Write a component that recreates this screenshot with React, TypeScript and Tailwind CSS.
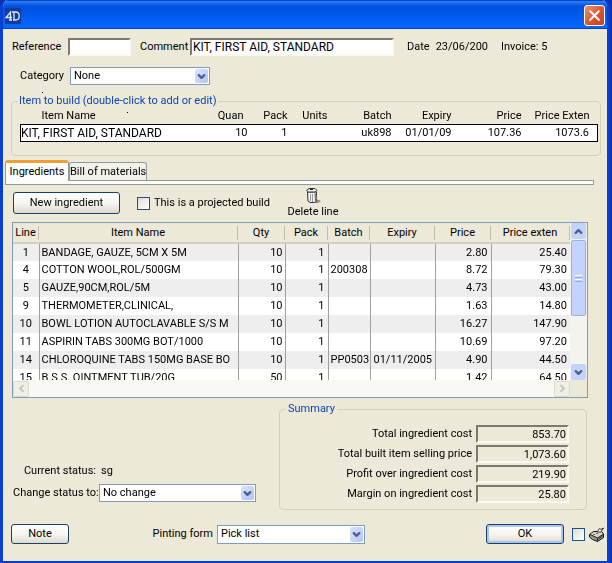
import React, { useState } from 'react';
import clsx from 'clsx';
import { ChevronDown, ChevronLeft, ChevronRight, ChevronUp, X } from 'lucide-react';

interface Ingredient {
  line: number;
  name: string;
  qty: number;
  pack: number;
  batch: string;
  expiry: string;
  price: string;
  total: string;
}

const INGREDIENTS: Ingredient[] = [
  { line: 1, name: 'BANDAGE, GAUZE, 5CM X 5M', qty: 10, pack: 1, batch: '', expiry: '', price: '2.80', total: '25.40' },
  { line: 4, name: 'COTTON WOOL,ROL/500GM', qty: 10, pack: 1, batch: '200308', expiry: '', price: '8.72', total: '79.30' },
  { line: 5, name: 'GAUZE,90CM,ROL/5M', qty: 10, pack: 1, batch: '', expiry: '', price: '4.73', total: '43.00' },
  { line: 9, name: 'THERMOMETER,CLINICAL,', qty: 10, pack: 1, batch: '', expiry: '', price: '1.63', total: '14.80' },
  { line: 10, name: 'BOWL LOTION AUTOCLAVABLE S/S M', qty: 10, pack: 1, batch: '', expiry: '', price: '16.27', total: '147.90' },
  { line: 11, name: 'ASPIRIN TABS 300MG BOT/1000', qty: 10, pack: 1, batch: '', expiry: '', price: '10.69', total: '97.20' },
  { line: 14, name: 'CHLOROQUINE TABS 150MG BASE BO', qty: 10, pack: 1, batch: 'PP0503', expiry: '01/11/2005', price: '4.90', total: '44.50' },
  { line: 15, name: 'B.S.S. OINTMENT TUB/20G', qty: 50, pack: 1, batch: '', expiry: '', price: '1.42', total: '64.50' },
];

const COLUMNS = [
  { label: 'Line', width: 'w-[26px]' },
  { label: 'Item Name', width: '' },
  { label: 'Qty', width: 'w-[47px]' },
  { label: 'Pack', width: 'w-[43px]' },
  { label: 'Batch', width: 'w-[42px]' },
  { label: 'Expiry', width: 'w-[65px]' },
  { label: 'Price', width: 'w-[56px]' },
  { label: 'Price exten', width: 'w-[79px]' },
];

const SUMMARY = [
  { id: 'total-cost', label: 'Total ingredient cost', value: '853.70' },
  { id: 'selling-price', label: 'Total built item selling price', value: '1,073.60' },
  { id: 'profit', label: 'Profit over ingredient cost', value: '219.90' },
  { id: 'margin', label: 'Margin on ingredient cost', value: '25.80' },
];

const SUNKEN =
  'h-[18px] border-2 border-t-[#7d7a6c] border-l-[#7d7a6c] border-r-[#faf9f4] border-b-[#faf9f4] outline-none';

const BUTTON =
  'rounded-[3px] border border-[#1c3f66] bg-linear-to-b from-white via-[#f6f5f0] to-[#dedacd] text-center';

const CHECKBOX =
  'size-[13px] shrink-0 appearance-none border border-[#1f5182] bg-linear-to-br from-[#dddcd6] to-white checked:bg-[#21a121]';

const SelectBox: React.FC<{ id: string; options: string[]; className: string }> = ({ id, options, className }) => (
  <div className={clsx('relative', className)}>
    <select id={id} className="h-full w-full appearance-none border border-[#7f9db9] bg-white pr-4 pl-[3px] outline-none">
      {options.map((option) => (
        <option key={option}>{option}</option>
      ))}
    </select>
    <span className="pointer-events-none absolute inset-y-[2px] right-[2px] flex w-[13px] items-center justify-center rounded-[2px] bg-linear-to-br from-[#dbe5fd] to-[#afc3f5]">
      <ChevronDown size={11} strokeWidth={5} className="text-[#4d6185]" />
    </span>
  </div>
);

const TrashIcon = () => (
  <svg width="16" height="16" viewBox="0 0 16 16" aria-hidden="true">
    <path d="M11 12l5 2-3 2H8z" fill="#8b8b86" />
    <path d="M2.500 5h9l-.5 9-1.500 1.500H5L3 14z" fill="#f2f2f0" stroke="#333" />
    <path d="M5.500 7v7M7.500 7v8" stroke="#9a9a98" />
    <path d="M9.500 6.500h1.500v7.500l-1 1z" fill="#777" />
    <path d="M1.500 3.500L4 1.500h6l2 2-2 1.500H3.500z" fill="#f0f0ee" stroke="#333" />
    <path d="M5 2.500h3" stroke="#222" />
  </svg>
);

const PrinterIcon = () => (
  <svg width="16" height="15" viewBox="0 0 16 15" aria-hidden="true">
    <path d="M.5 7.500l4-3 8 0 2 2.500v3.500l-6 4-5-2-3-2.500z" fill="#9a998f" stroke="#111" />
    <path d="M1 7.500l4-2.500h7l2 2-5.500 3.500z" fill="#d6d5cc" />
    <path d="M1 7.500l7.500 3.500L14 7.500M8.500 11v3" stroke="#222" fill="none" />
    <path d="M8 5l2.500-3.500 1.500 1L14.500 1 12 5z" fill="#fff" stroke="#333" />
    <path d="M9.500 12l4-3" stroke="#333" />
    <path d="M4 7.500h2" stroke="#2a9a3a" />
    <path d="M7 6.500h2" stroke="#d44" />
  </svg>
);

export default function App() {
  const [tab, setTab] = useState('Ingredients');

  return (
    <div className="bg-[#0831b4] font-['Roboto','Liberation_Sans',sans-serif] text-[11px] leading-[14px] text-black">
      <div className="mr-[2px] overflow-hidden rounded-t-lg border-x-[3px] border-b-[3px] border-[#0b3fd0] bg-[#ece9d8]">
        {/* Title bar */}
        <header className="-mx-[3px] flex h-[29px] items-center justify-between border-t border-b border-t-[#0a3fc0] border-b-[#0440c0] bg-linear-to-b from-[#2a80f5] via-[#0050e0] via-20% to-[#0568ff] px-[5px] pt-[2px]">
          <span className="flex size-4 items-center justify-center bg-[#103c9c]">
            <svg width="16" height="16" viewBox="0 0 16 16" role="img" aria-label="4D">
              <path d="M5.500 12V4L1 9.500h6M4 12h3M7 4h3.500c5 0 5 8 0 8H8M9 4v8" fill="none" stroke="#dfe8fb" strokeWidth="1.300" />
            </svg>
          </span>
          <button aria-label="Close" className="flex size-[21px] items-center justify-center rounded-[3px] border border-white bg-linear-to-br from-[#ee9377] via-[#de5632] to-[#c5401c]">
            <X size={17} strokeWidth={3} className="text-white" />
          </button>
        </header>

        <main className="pb-[17px]">
          {/* Build details */}
          <div className="flex items-center pt-[9px] pl-[9px]">
            <label htmlFor="reference" className="w-[56px]">Reference</label>
            <input id="reference" autoFocus className={clsx(SUNKEN, 'w-[63px] bg-white pl-px')} />
            <label htmlFor="comment" className="ml-[9px] w-[50px]">Comment</label>
            <input id="comment" defaultValue="KIT, FIRST AID, STANDARD" className={clsx(SUNKEN, 'w-[204px] bg-white pl-px text-xs')} />
            <span className="ml-[13px]">Date</span>
            <span className="ml-[6px]">23/06/200</span>
            <span className="ml-[13px]">Invoice: 5</span>
          </div>
          <div className="flex items-center pt-[11px] pl-[17px]">
            <label htmlFor="category" className="w-[50px]">Category</label>
            <SelectBox id="category" options={['None']} className="h-[18px] w-[140px]" />
          </div>

          <fieldset className="relative mt-[9px] mr-[6px] ml-[8px] h-[62px] rounded border border-[#d0d0bf] pr-[2px] pl-[4px]">
            {/* Stray marks around the group caption */}
            <span className="absolute -top-[16px] left-[30px] size-px bg-black" />
            <span className="absolute top-[4px] left-[115px] size-px bg-black" />
            <legend className="ml-[2px] px-px text-[#0b46b5]">Item to build (double-click to add or edit)</legend>
            <table className="ml-[4px] w-[calc(100%-4px)] table-fixed border-collapse text-right">
              <thead>
                <tr className="h-[16px]">
                  <th className="pl-[21px] text-left font-normal">Item Name</th>
                  <th className="w-[47px] pr-[4px] font-normal">Quan</th>
                  <th className="w-[40px] font-normal">Pack</th>
                  <th className="w-[40px] font-normal">Units</th>
                  <th className="w-[64px] font-normal">Batch</th>
                  <th className="w-[60px] font-normal">Expiry</th>
                  <th className="w-[70px] font-normal">Price</th>
                  <th className="w-[76px] pr-[8px] font-normal">Price Exten</th>
                </tr>
              </thead>
              <tbody>
                <tr className="h-[17px] border border-black bg-white">
                  <td className="text-left text-xs leading-[14px]">KIT, FIRST AID, STANDARD</td>
                  <td>10</td>
                  <td>1</td>
                  <td />
                  <td>uk898</td>
                  <td>01/01/09</td>
                  <td>107.36</td>
                  <td className="pr-[8px]">1073.6</td>
                </tr>
              </tbody>
            </table>
          </fieldset>

          {/* Tabs */}
          <div className="mt-[4px] mr-[13px] ml-[2px]">
            <div role="tablist" className="flex items-end">
              {['Ingredients', 'Bill of materials'].map((name) => (
                <button
                  key={name}
                  role="tab"
                  aria-selected={tab === name}
                  onClick={() => setTab(name)}
                  className={clsx(
                    'rounded-t-[3px] border-x border-[#919b9c] whitespace-nowrap',
                    tab === name
                      ? 'z-10 -mb-px h-[21px] w-[64px] border-t-[3px] border-t-[#f0a030] bg-[#fcfcfa]'
                      : 'h-[18px] border-t bg-[#f3f2ea]'
                  )}
                >
                  {name}
                </button>
              ))}
            </div>
            <div className="h-[5px] border border-[#919b9c] bg-[#fcfcfa]" />
          </div>

          {/* Toolbar */}
          <div className="flex items-start pl-[10px]">
            <button className={clsx(BUTTON, 'mt-[7px] h-[22px] w-[107px]')}>New ingredient</button>
            <label className="mt-[11px] ml-[17px] flex w-[150px] items-center gap-[4px]">
              <input type="checkbox" className={CHECKBOX} />
              This is a projected build
            </label>
            <button className="flex w-[52px] flex-col items-center pt-[2px] leading-[18px] whitespace-nowrap">
              <TrashIcon />
              Delete line
            </button>
          </div>

          {/* Ingredient list */}
          <div className="mt-px mr-[19px] ml-[9px] border border-[#7f9db9] bg-white">
            <div className="flex h-[157px]">
              <div className="min-w-0 flex-1 overflow-hidden">
                <table className="w-full table-fixed border-collapse">
                  <thead>
                    <tr className="h-[20px] border-b-2 border-[#d3cfbf] bg-[#ece9d8]">
                      {COLUMNS.map((column) => (
                        <th key={column.label} className={clsx(column.width, 'font-normal')}>
                          <div className="border-r border-[#c1bdac]">{column.label}</div>
                        </th>
                      ))}
                    </tr>
                  </thead>
                  <tbody>
                    {INGREDIENTS.map((item) => (
                      <tr key={item.line} className="h-[18px] text-right whitespace-nowrap odd:bg-[#eeeeee] [&>td:not(:last-child)]:border-r [&>td]:overflow-hidden [&>td]:border-[#a0a0a0]">
                        <td className="text-center">{item.line}</td>
                        <td className="pl-[2px] text-left">{item.name}</td>
                        <td className="pr-[2px]">{item.qty}</td>
                        <td className="pr-[3px]">{item.pack}</td>
                        <td className="pl-[2px] text-left">{item.batch}</td>
                        <td className="pl-[3px] text-left">{item.expiry}</td>
                        <td className="pr-[3px]">{item.price}</td>
                        <td className="pr-[3px]">{item.total}</td>
                      </tr>
                    ))}
                  </tbody>
                </table>
              </div>
              <div className="flex w-[17px] flex-col items-center bg-[#f4f3ee] px-px">
                <button aria-label="Scroll up" className="flex h-4 w-full items-center justify-center rounded-[2px] bg-[#c3d3fd]">
                  <ChevronUp size={11} strokeWidth={5} className="text-[#4d6185]" />
                </button>
                <div className="mt-px flex h-[76px] w-full flex-col items-center justify-center gap-px rounded-[2px] border border-[#98b0e8] bg-[#c3d3fd]">
                  <span className="h-px w-[7px] bg-white" />
                  <span className="h-px w-[7px] bg-[#8fa8e8]" />
                  <span className="h-px w-[7px] bg-white" />
                  <span className="h-px w-[7px] bg-[#8fa8e8]" />
                </div>
                <button aria-label="Scroll down" className="mt-auto flex h-4 w-full items-center justify-center rounded-[2px] bg-[#c3d3fd]">
                  <ChevronDown size={11} strokeWidth={5} className="text-[#4d6185]" />
                </button>
              </div>
            </div>
            <div className="flex h-[17px] bg-[#ece9d8] pr-[17px]">
              <div className="flex flex-1 items-center justify-between bg-[#f9f8f4]">
                <button aria-label="Scroll left" className="flex size-4 items-center justify-center rounded-[2px] border border-[#dddacb] bg-[#f0efe6]">
                  <ChevronLeft size={11} strokeWidth={4} className="text-[#c6c4b6]" />
                </button>
                <button aria-label="Scroll right" className="flex size-4 items-center justify-center rounded-[2px] border border-[#dddacb] bg-[#f0efe6]">
                  <ChevronRight size={11} strokeWidth={4} className="text-[#c6c4b6]" />
                </button>
              </div>
            </div>
          </div>

          {/* Status and totals */}
          <div className="mt-[4px] flex items-end justify-between pr-[20px] pl-[10px]">
            <div className="grid grid-cols-[83px_157px] items-center gap-x-[3px] gap-y-[6px] pb-[8px]">
              <span className="text-right">Current status:</span>
              <span className="pl-[2px]">sg</span>
              <label htmlFor="status" className="text-right whitespace-nowrap">Change status to:</label>
              <SelectBox id="status" options={['No change']} className="h-[18px]" />
            </div>
            <fieldset className="h-[108px] w-[308px] rounded border border-[#d0d0bf] pr-[17px]">
              <legend className="ml-[6px] px-[2px] text-[#0b46b5]">Summary</legend>
              <div className="flex flex-col items-end gap-[2px] pt-[9px]">
                {SUMMARY.map((row) => (
                  <div key={row.id} className="flex items-center gap-[4px]">
                    <label htmlFor={row.id}>{row.label}</label>
                    <input id={row.id} readOnly value={row.value} className={clsx(SUNKEN, 'w-[93px] bg-[#ece9d8] pr-px text-right')} />
                  </div>
                ))}
              </div>
            </fieldset>
          </div>

          {/* Footer */}
          <footer className="mt-[14px] flex items-center pr-[2px] pl-[8px]">
            <button className={clsx(BUTTON, 'h-5 w-[58px]')}>Note</button>
            <label htmlFor="form" className="w-[148px] pr-[4px] text-right whitespace-nowrap">Pinting form</label>
            <SelectBox id="form" options={['Pick list']} className="h-[19px] w-[148px]" />
            <button className={clsx(BUTTON, 'ml-auto h-5 w-[78px] shadow-[inset_0_0_0_2px_#a9c5f0]')}>OK</button>
            <input type="checkbox" aria-label="Print" className={clsx(CHECKBOX, 'ml-[8px]')} />
            <span className="ml-[4px]">
              <PrinterIcon />
            </span>
          </footer>
        </main>
      </div>
    </div>
  );
}
